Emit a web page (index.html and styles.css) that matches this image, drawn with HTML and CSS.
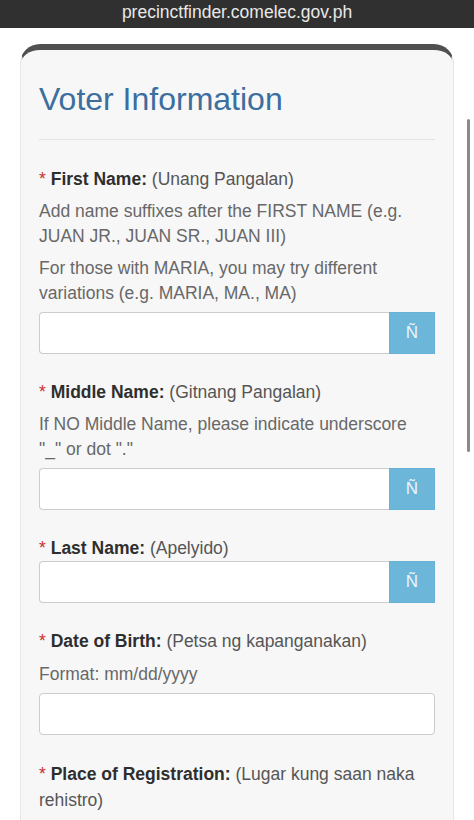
FILE: index.html
```html
<!DOCTYPE html>
<html lang="en">
<head>
<meta charset="utf-8">
<title>Voter Information</title>
<link rel="stylesheet" href="styles.css">
</head>
<body>
<div class="urlbar">precinctfinder.comelec.gov.ph</div>
<main class="page">
  <section class="card">
    <h1 class="title">Voter Information</h1>
    <hr class="rule">

    <div class="group">
      <div class="label"><span class="req">*</span> <b>First Name:</b> (Unang Pangalan)</div>
      <p class="help">Add name suffixes after the FIRST NAME (e.g. JUAN JR., JUAN SR., JUAN III)</p>
      <p class="help">For those with MARIA, you may try different variations (e.g. MARIA, MA., MA)</p>
      <div class="input-group spaced">
        <input class="field" type="text">
        <button class="addon" type="button">Ñ</button>
      </div>
    </div>

    <div class="group">
      <div class="label"><span class="req">*</span> <b>Middle Name:</b> (Gitnang Pangalan)</div>
      <p class="help">If NO Middle Name, please indicate underscore "_" or dot "."</p>
      <div class="input-group spaced">
        <input class="field" type="text">
        <button class="addon" type="button">Ñ</button>
      </div>
    </div>

    <div class="group">
      <div class="label"><span class="req">*</span> <b>Last Name:</b> (Apelyido)</div>
      <div class="input-group">
        <input class="field" type="text">
        <button class="addon" type="button">Ñ</button>
      </div>
    </div>

    <div class="group">
      <div class="label"><span class="req">*</span> <b>Date of Birth:</b> (Petsa ng kapanganakan)</div>
      <p class="help help-tight">Format: mm/dd/yyyy</p>
      <div class="input-group spaced">
        <input class="field field-full" type="text">
      </div>
    </div>

    <div class="group">
      <div class="label label-wrap"><span class="req">*</span> <b>Place of Registration:</b> (Lugar kung saan naka rehistro)</div>
    </div>
  </section>
</main>
<div class="scrollbar"></div>
</body>
</html>
```

FILE: styles.css
```css
* { box-sizing: border-box; }

html, body {
  margin: 0;
  padding: 0;
  background: #ffffff;
  font-family: "Liberation Sans", Arial, Helvetica, sans-serif;
  overflow: hidden;
}

.urlbar {
  height: 28px;
  background: #303030;
  color: #e8e8e8;
  font-size: 17.5px;
  line-height: 25px;
  text-align: center;
}

.page {
  padding: 16px 20px 0 20px;
}

.card {
  background: #f7f7f7;
  border: 1px solid #e6e6e6;
  border-top: 6px solid #505050;
  border-radius: 20px 20px 0 0;
  padding: 32px 18px 40px 18px;
}

.title {
  margin: 0;
  font-size: 32px;
  line-height: 34px;
  font-weight: normal;
  color: #3c6e9e;
}

.rule {
  margin: 23px 0 27px 0;
  border: 0;
  border-top: 1px solid #e4e4e4;
  height: 0;
}

.group {
  margin-bottom: 26px;
  font-size: 17.5px;
  line-height: 25px;
}

.label {
  color: #555555;
}

.label-wrap {
  line-height: 26px;
}

.label b {
  color: #2e2e2e;
}

.req {
  color: #c9302c;
}

.help {
  margin: 7px 0 0 0;
  max-width: 385px;
  color: #686868;
}

.help-tight {
  margin-top: 8px;
}

.input-group {
  display: flex;
  height: 42px;
}

.input-group.spaced {
  margin-top: 6px;
}

.field {
  flex: 1;
  min-width: 0;
  height: 42px;
  margin: 0;
  border: 1px solid #cccccc;
  border-right: 0;
  border-radius: 4px 0 0 4px;
  background: #ffffff;
  font: inherit;
}

.field-full {
  border-right: 1px solid #cccccc;
  border-radius: 4px;
}

.addon {
  width: 46px;
  height: 42px;
  margin: 0;
  padding: 0;
  border: 1px solid #67b2d6;
  background: #6cb6d9;
  color: #eaf5fb;
  font-family: inherit;
  font-size: 17px;
}

.scrollbar {
  position: fixed;
  right: 4px;
  top: 119px;
  width: 3px;
  height: 333px;
  border-radius: 2px;
  background: #8a8a8a;
}
```
